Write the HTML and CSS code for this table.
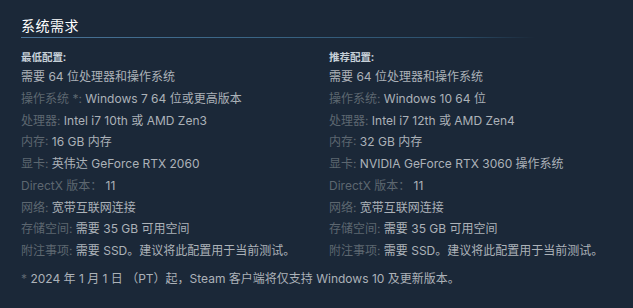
FILE: index.html
```html
<!DOCTYPE html>
<html lang="zh-CN">
<head>
<meta charset="utf-8">
<title>系统需求</title>
<link rel="stylesheet" href="styles.css">
</head>
<body>
<div class="sysreq">
  <h2 class="title">系统需求</h2>
  <div class="cols">
    <div class="col">
      <div class="head">最低配置:</div>
      <ul class="list">
        <li>需要 64 位处理器和操作系统</li>
        <li><span class="lbl">操作系统 *:</span> Windows 7 64 位或更高版本</li>
        <li><span class="lbl">处理器:</span> Intel i7 10th 或 AMD Zen3</li>
        <li><span class="lbl">内存:</span> 16 GB 内存</li>
        <li><span class="lbl">显卡:</span> 英伟达 GeForce RTX 2060</li>
        <li><span class="lbl">DirectX 版本：</span> 11</li>
        <li><span class="lbl">网络:</span> 宽带互联网连接</li>
        <li><span class="lbl">存储空间:</span> 需要 35 GB 可用空间</li>
        <li><span class="lbl">附注事项:</span> 需要 SSD。建议将此配置用于当前测试。</li>
      </ul>
    </div>
    <div class="col">
      <div class="head">推荐配置:</div>
      <ul class="list">
        <li>需要 64 位处理器和操作系统</li>
        <li><span class="lbl">操作系统:</span> Windows 10 64 位</li>
        <li><span class="lbl">处理器:</span> Intel i7 12th 或 AMD Zen4</li>
        <li><span class="lbl">内存:</span> 32 GB 内存</li>
        <li><span class="lbl">显卡:</span> NVIDIA GeForce RTX 3060 操作系统</li>
        <li><span class="lbl">DirectX 版本：</span> 11</li>
        <li><span class="lbl">网络:</span> 宽带互联网连接</li>
        <li><span class="lbl">存储空间:</span> 需要 35 GB 可用空间</li>
        <li><span class="lbl">附注事项:</span> 需要 SSD。建议将此配置用于当前测试。</li>
      </ul>
    </div>
  </div>
  <p class="note"><span class="lbl">*</span> 2024 年 1 月 1 日 （PT）起，Steam 客户端将仅支持 Windows 10 及更新版本。</p>
</div>
</body>
</html>
```

FILE: styles.css
```css
html, body {
  margin: 0;
  padding: 0;
  background: #1b2838;
}
body {
  width: 633px;
  height: 308px;
  overflow: hidden;
  font-family: "Inter", "Noto Sans CJK SC", sans-serif;
  color: #acb2b8;
  font-size: 12px;
  text-spacing-trim: space-all;
}
.sysreq {
  padding: 0 0 0 21px;
}
.title {
  margin: 16px 0 0 0;
  width: 514px;
  padding: 0 0 2px 0;
  font-family: "Noto Sans", "Noto Sans CJK SC", sans-serif;
  font-size: 14px;
  line-height: 20px;
  font-weight: normal;
  color: #ffffff;
  letter-spacing: 0.5px;
  background: linear-gradient(to right, #4a7397 0%, #3a6585 45%, #2c4f6b 85%, rgba(27,40,56,0) 100%) no-repeat left bottom / 100% 1px;
}
.cols {
  display: grid;
  grid-template-columns: 308px 300px;
  margin-top: 11px;
}
.head {
  font-family: "Noto Sans", "Noto Sans CJK SC", sans-serif;
  font-size: 10.5px;
  line-height: 17px;
  font-weight: bold;
  color: #c6d0d8;
}
.list {
  list-style: none;
  margin: 0;
  padding: 0;
}
.list li {
  line-height: 21.75px;
  white-space: nowrap;
}
.lbl {
  color: #5d6770;
}
.note {
  margin: 6px 0 0 0;
  line-height: 22px;
  color: #acb2b8;
}
```
